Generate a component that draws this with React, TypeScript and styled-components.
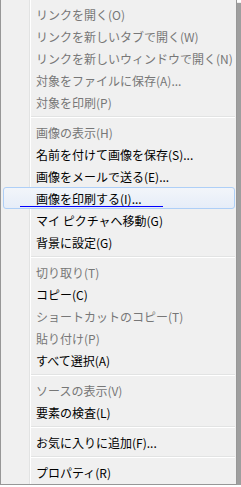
import React from 'react';
import styled, { createGlobalStyle } from 'styled-components';

type Entry =
  | { kind: 'item'; label: string; disabled?: boolean; hover?: boolean }
  | { kind: 'sep' };

const entries: Entry[] = [
  { kind: 'item', label: 'リンクを開く(O)', disabled: true },
  { kind: 'item', label: 'リンクを新しいタブで開く(W)', disabled: true },
  { kind: 'item', label: 'リンクを新しいウィンドウで開く(N)', disabled: true },
  { kind: 'item', label: '対象をファイルに保存(A)...', disabled: true },
  { kind: 'item', label: '対象を印刷(P)', disabled: true },
  { kind: 'sep' },
  { kind: 'item', label: '画像の表示(H)', disabled: true },
  { kind: 'item', label: '名前を付けて画像を保存(S)...' },
  { kind: 'item', label: '画像をメールで送る(E)...' },
  { kind: 'item', label: '画像を印刷する(I)...', hover: true },
  { kind: 'item', label: 'マイ ピクチャへ移動(G)' },
  { kind: 'item', label: '背景に設定(G)' },
  { kind: 'sep' },
  { kind: 'item', label: '切り取り(T)', disabled: true },
  { kind: 'item', label: 'コピー(C)' },
  { kind: 'item', label: 'ショートカットのコピー(T)', disabled: true },
  { kind: 'item', label: '貼り付け(P)', disabled: true },
  { kind: 'item', label: 'すべて選択(A)' },
  { kind: 'sep' },
  { kind: 'item', label: 'ソースの表示(V)', disabled: true },
  { kind: 'item', label: '要素の検査(L)' },
  { kind: 'sep' },
  { kind: 'item', label: 'お気に入りに追加(F)...' },
  { kind: 'sep' },
  { kind: 'item', label: 'プロパティ(R)' },
];

const App = () => {
  return (
    <>
      <GlobalStyle />
      <StMenu>
        {entries.map((e, i) =>
          e.kind === 'sep' ? (
            <StSeparator key={i} />
          ) : (
            <StItem key={i} $disabled={e.disabled} $hover={e.hover}>
              {e.label}
              {e.hover && <StMark />}
            </StItem>
          )
        )}
      </StMenu>
    </>
  );
};

export default App;

const GlobalStyle = createGlobalStyle`
  html, body {
    margin: 0;
    padding: 0;
    background: #ffffff;
  }
  body {
    font-family: "Noto Sans CJK JP", "Noto Sans", sans-serif;
    font-size: 12px;
  }
`;

const StMenu = styled.div`
  width: 235px;
  padding: 3px 0 1px;
  border-left: 1px solid #979797;
  border-right: 1px solid #979797;
  border-bottom: 1px solid #979797;
  background:
    linear-gradient(
      to right,
      transparent 28px,
      #e2e3e3 28px,
      #e2e3e3 29px,
      #ffffff 29px,
      #ffffff 30px,
      transparent 30px
    ),
    #f0f0f0;
  box-shadow: 4px 3px 1px rgba(0, 0, 0, 0.38);
  display: flex;
  flex-direction: column;
`;

const StItem = styled.div<{ $disabled?: boolean; $hover?: boolean }>`
  position: relative;
  height: 22px;
  margin: 0 1px 0 2px;
  padding-left: 32px;
  box-sizing: border-box;
  white-space: nowrap;
  color: ${(p) => (p.$disabled ? '#777777' : '#000000')};
  border: 1px solid ${(p) => (p.$hover ? '#aecff7' : 'transparent')};
  border-radius: 3px;
  line-height: 21px;
  background: ${(p) =>
    p.$hover ? 'linear-gradient(to bottom, #f2f5fa, #e6edf8)' : 'transparent'};
`;

const StMark = styled.span`
  position: absolute;
  left: 16px;
  top: 18px;
  width: 143px;
  height: 1px;
  background: #0000ff;
`;

const StSeparator = styled.div`
  height: 8px;
  margin-left: 30px;
  margin-right: 1px;
  display: flex;
  flex-direction: column;
  justify-content: center;
  &::before {
    content: '';
    display: block;
    height: 1px;
    background: #e2e3e3;
  }
  &::after {
    content: '';
    display: block;
    height: 1px;
    background: #ffffff;
  }
`;
